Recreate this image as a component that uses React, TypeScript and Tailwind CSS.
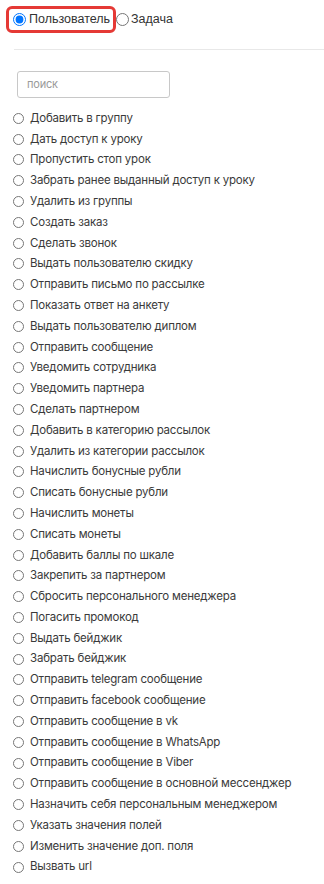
import React from "react";

const items = [
  "Добавить в группу",
  "Дать доступ к уроку",
  "Пропустить стоп урок",
  "Забрать ранее выданный доступ к уроку",
  "Удалить из группы",
  "Создать заказ",
  "Сделать звонок",
  "Выдать пользователю скидку",
  "Отправить письмо по рассылке",
  "Показать ответ на анкету",
  "Выдать пользователю диплом",
  "Отправить сообщение",
  "Уведомить сотрудника",
  "Уведомить партнера",
  "Сделать партнером",
  "Добавить в категорию рассылок",
  "Удалить из категории рассылок",
  "Начислить бонусные рубли",
  "Списать бонусные рубли",
  "Начислить монеты",
  "Списать монеты",
  "Добавить баллы по шкале",
  "Закрепить за партнером",
  "Сбросить персонального менеджера",
  "Погасить промокод",
  "Выдать бейджик",
  "Забрать бейджик",
  "Отправить telegram сообщение",
  "Отправить facebook сообщение",
  "Отправить сообщение в vk",
  "Отправить сообщение в WhatsApp",
  "Отправить сообщение в Viber",
  "Отправить сообщение в основной мессенджер",
  "Назначить себя персональным менеджером",
  "Указать значения полей",
  "Изменить значение доп. поля",
  "Вызвать url",
];

export default function App() {
  return (
    <div className="w-[324px] h-[884px] bg-white overflow-hidden">
      <div className="flex items-center pt-[6px] pl-[6px] font-['Liberation_Sans',Arial,sans-serif] text-[12.5px] text-[#333]">
        <div className="flex items-center h-[27px] w-[110px] border-[3px] border-[#e53935] rounded-[6px] pl-[4px]">
          <input type="radio" name="t" defaultChecked className="m-0 w-[13px] h-[13px]" />
          <span className="ml-[3px]">Пользователь</span>
        </div>
        <input type="radio" name="t" className="m-0 w-[13px] h-[13px]" />
        <span className="ml-[2px]">Задача</span>
      </div>
      <div className="ml-[14px] mt-[16px] h-px bg-[#e8e8e8]" />
      <div className="ml-[17px] mt-[21px] w-[153px] h-[27px] border border-[#c8c8c8] rounded-[3px] flex items-center pl-[9px]">
        <input
          placeholder="поиск"
          className="w-full outline-none bg-transparent text-[11px] font-['Inter',sans-serif] placeholder:text-[#9a9a9a] tracking-[-0.2px]"
        />
      </div>
      <div className="mt-[10px] flex flex-col font-['Inter',sans-serif] text-[11.5px] text-[#3a3a3a] tracking-[-0.2px]">
        {items.map((t) => (
          <label key={t} className="flex items-center h-[20.8px] pl-[13px]">
            <input type="radio" name="a" className="m-0 w-[11px] h-[11px]" />
            <span className="ml-[6px] whitespace-nowrap">{t}</span>
          </label>
        ))}
      </div>
    </div>
  );
}
